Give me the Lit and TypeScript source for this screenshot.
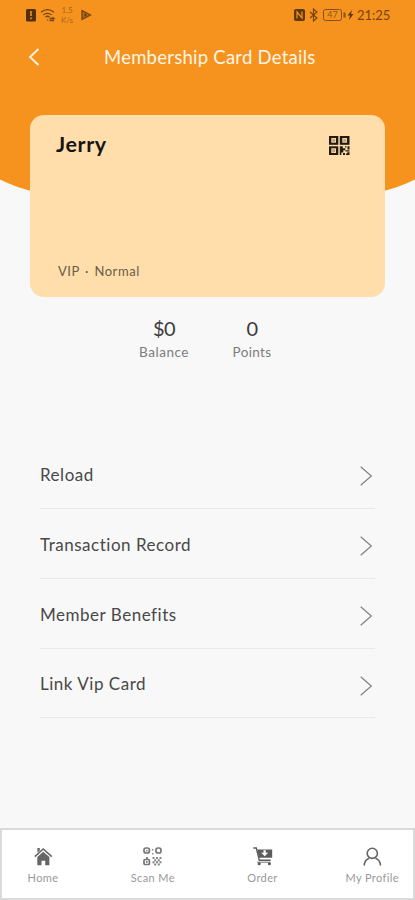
import { LitElement, html, svg, css } from "lit";
import { customElement } from "lit/decorators.js";

const scanIcon = svg`
  <g fill="none" stroke="#777" stroke-width="1.7">
    <rect x="1" y="1" width="5.4" height="5" rx="2"/>
    <rect x="13" y="1" width="5" height="5" rx="2"/>
    <rect x="1" y="12.5" width="5.4" height="5" rx="1"/>
  </g>
  <g fill="#888">
    <path d="M3 3h1.6v1.4H3zM3 14h1.6v2H3zM9 2h1.4v1.6H9zM9 6h1.4v1.4H9zM3 10h2v2H3z"/>
    <path d="M9.5 10h2v2h-2zM13 10h2v2h-2zM16.5 10h2v2h-2zM11.2 12.2h2v2h-2zM14.8 12.2h2v2h-2zM9.5 14.3h2v2h-2zM13 14.3h2v2h-2zM16.5 14.3h2v2h-2zM11.2 16.6h2v1.8h-2zM14.8 16.6h2v1.8h-2z"/>
  </g>`;

const homeIcon = svg`
  <path d="M.8 9.6 9.2 2l8.6 7.6" fill="none" stroke="#666" stroke-width="1.6"/>
  <path d="M3.4 1h2.4v2.4L3.4 5.600zM3.300 10.100 9.200 4.700l6.200 5.400v8.200h-4.200v-4.600H7.500v4.600H3.300z" fill="#666"/>`;

const cartIcon = svg`
  <path d="M.3 1h3l3 12.300h11.400" fill="none" stroke="#5c5c5c" stroke-width="1.4"/>
  <path d="M4.200 2.600h15v8.200H6.100z" fill="#5c5c5c"/>
  <path d="M10.500 3.300h2.300v2.500h2.400l-3.500 3.400-3.500-3.400h2.300z" fill="#fff"/>
  <path d="M4.200 15.200h13.200" stroke="#777" stroke-width="1"/>
  <circle cx="6.200" cy="16.800" r="1.500" fill="#555"/><circle cx="16.400" cy="16.800" r="1.500" fill="#555"/>`;

const profileIcon = svg`
  <g fill="none" stroke="#666" stroke-width="1.6">
    <circle cx="9.3" cy="6.3" r="5.1"/>
    <path d="M1.200 18.500c.2-3.700 2-6.300 5-7.300M12.400 11.200c3 1 4.900 3.600 5.100 7.300"/>
  </g>`;

@customElement("app-root")
export class AppRoot extends LitElement {
  static styles = css`
    :host {
      display: flex;
      flex-direction: column;
      position: relative;
      width: 415px;
      height: 900px;
      overflow: hidden;
      background: #f8f8f8;
      color: #333;
      font-family: Lato, "Noto Sans", sans-serif;
      white-space: nowrap;
    }
    * { box-sizing: border-box; }
    svg { display: block; flex: none; overflow: visible; }
    .backdrop { position: absolute; left: 0; top: 0; }
    .status {
      position: relative;
      display: flex;
      align-items: center;
      height: 30px;
      padding: 0 24px 0 25px;
      color: #76450f;
    }
    .rate {
      width: 16px;
      margin-left: 2px;
      font-size: 8px;
      line-height: 10px;
      text-align: center;
      color: #a9651c;
    }
    .play { margin-left: 6px; }
    .right { display: flex; align-items: center; margin-left: auto; }
    .clock { font-size: 13px; margin-left: 3px; width: 34px; line-height: 16px; }
    .title-bar {
      position: relative;
      display: flex;
      align-items: center;
      height: 53px;
      padding-left: 28px;
    }
    .title {
      margin: 0 0 0 63px;
      font-size: 18.5px;
      font-weight: 400;
      letter-spacing: 0.25px;
      color: #fff6e6;
    }
    .card {
      position: relative;
      display: flex;
      flex-direction: column;
      justify-content: space-between;
      width: 355px;
      height: 182px;
      margin: 32px 0 0 30px;
      padding: 16px 35px 17px 26px;
      border-radius: 14px;
      background: #ffdeab;
    }
    .card-head { display: flex; justify-content: space-between; }
    .name { font-size: 21.5px; line-height: 26px; font-weight: 700; color: #151515; letter-spacing: 0.6px; }
    .qr { margin-top: 5px; }
    .tier { margin-left: 2px; font-size: 13px; line-height: 18px; letter-spacing: 0.55px; word-spacing: 1.6px; color: #6c5b45; }
    .stats { display: flex; height: 152px; padding: 18px 0 0 133px; }
    .stat { width: 62px; margin-right: 26px; text-align: center; }
    .value { font-size: 20px; line-height: 26px; letter-spacing: -0.5px; color: #3c3c3c; }
    .caption { font-size: 13.5px; line-height: 23px; letter-spacing: 0.55px; color: #7c7c7c; }
    .stat + .stat .caption { letter-spacing: 0.35px; }
    .menu { display: flex; flex-direction: column; width: 335px; margin: -9.5px 0 0 40px; }
    .row {
      display: flex;
      justify-content: space-between;
      height: 69.7px;
      padding: 23.8px 3px 0 0;
      border-bottom: 1px solid #eaeaea;
    }
    .label { font-size: 17px; line-height: 24px; letter-spacing: 0.52px; color: #484848; }
    .chevron { margin-top: 3.2px; }
    .nav {
      display: flex;
      width: 415px;
      height: 72px;
      margin-top: auto;
      border: 2px solid #dadada;
      background: #fff;
    }
    .tab {
      display: flex;
      flex-direction: column;
      align-items: center;
      width: 109.7px;
      flex: none;
      padding-top: 17px;
    }
    .first { width: 82px; margin-right: 14px; }
    .tab-label { margin-top: 4px; font-size: 11px; line-height: 16px; letter-spacing: 0.4px; color: #999; }
  `;

  private rows = ["Reload", "Transaction Record", "Member Benefits", "Link Vip Card"];

  private tabs = [
    { label: "Home", icon: homeIcon },
    { label: "Scan Me", icon: scanIcon },
    { label: "Order", icon: cartIcon },
    { label: "My Profile", icon: profileIcon },
  ];

  render() {
    return html`
      <svg class="backdrop" width="415" height="220" viewBox="0 0 415 220">
        <path d="M0 0H415V179.500Q398 188 380 191.700H35Q17 188 0 179.500z" fill="#f6921e"/>
      </svg>
      <div class="status">
        <svg width="32" height="14" viewBox="0 0 32 14">
          <rect x="1" y="1" width="10" height="12.500" rx="1.500" fill="#533009"/>
          <path d="M6 3v5M6 9.500v1.700" stroke="#f6921e" stroke-width="1.600"/>
          <g fill="none" stroke="#704416" stroke-width="1.300">
            <path d="M16 4.200q6.500-5 13 0M18.300 6.800q4.200-3 8.400 0M20.500 9q2-1.500 4 0M22.500 11.500v1"/>
            <path d="M24.500 10.500h4.500l-1.400-1.400M29 12.500h-4.500"/>
          </g>
        </svg>
        <div class="rate">1.5<br>K/s</div>
        <svg class="play" width="11" height="12" viewBox="0 0 11 12">
          <path d="M1 1.500 9.500 6 1 10.500z" fill="#b26a1c" stroke="#754511" stroke-width="1.300"/>
          <path d="M3.500 4 6 6 3.500 8z" fill="#6b3d0c"/>
        </svg>
        <div class="right">
          <svg width="62" height="14" viewBox="0 0 62 14">
            <rect x="2" y="1" width="11" height="12" rx="2" fill="#613809"/>
            <path d="M5 10.500V4l5 6V3.500" fill="none" stroke="#f6921e" stroke-width="1.200"/>
            <path d="m18 4 7 6-3.500 3V1L25 4l-7 6" fill="none" stroke="#744512" stroke-width="1.200"/>
            <rect x="31.500" y="1.500" width="18" height="11" rx="2" fill="none" stroke="#85511b"/>
            <path d="M52.500 4.500v5" stroke="#85511b" stroke-width="2"/>
            <text x="40.500" y="10.300" text-anchor="middle" font-size="9" fill="#92591b">47</text>
            <path d="m60 2-4.500 5.500h2.500L57 12l4.500-6H59z" fill="#613809"/>
          </svg>
          <div class="clock">21:25</div>
        </div>
      </div>
      <div class="title-bar">
        <svg width="13" height="18" viewBox="0 0 13 18">
          <path d="M10.500 1 2 9l8.500 8" fill="none" stroke="#fff3df" stroke-width="1.900"/>
        </svg>
        <h1 class="title">Membership Card Details</h1>
      </div>
      <section class="card">
        <div class="card-head">
          <div class="name">Jerry</div>
          <svg class="qr" width="21" height="19" viewBox="0 0 21 19">
            <g fill="#211b13">
              <rect width="9.300" height="8.800"/><rect x="10.800" width="9.700" height="8.800"/>
              <rect y="10.300" width="9.300" height="8.700"/>
              <path d="M10.800 10.300h3v2h2.500v2h-2v2.200h-2V19h-1.500zM16 10.300h1.500v1.200H16zM18.500 10.300h2v3.200h-2zM16.500 14.200h4v1.200h-4zM14 17h2v2h-2zM18.300 16.300h2.200V19H17v-1.500h1.300z"/>
            </g>
            <g fill="#bba078" stroke="#f4d29f" stroke-width="1">
              <rect x="2.800" y="2.500" width="3.700" height="3.700"/><rect x="13.800" y="2.500" width="3.700" height="3.700"/>
              <rect x="2.800" y="12.800" width="3.700" height="3.700"/>
            </g>
          </svg>
        </div>
        <div class="tier">VIP · Normal</div>
      </section>
      <section class="stats">
        <div class="stat"><div class="value">$0</div><div class="caption">Balance</div></div>
        <div class="stat"><div class="value">0</div><div class="caption">Points</div></div>
      </section>
      <section class="menu">
        ${this.rows.map((label) => html`
          <div class="row">
            <span class="label">${label}</span>
            <svg class="chevron" width="12" height="20" viewBox="0 0 12 20">
              <path d="M.7.700 11.300 10 .7 19.300" fill="none" stroke="#858585" stroke-width="1.300"/>
            </svg>
          </div>`)}
      </section>
      <nav class="nav">
        ${this.tabs.map((tab, i) => html`
          <div class="tab ${i === 0 ? "first" : ""}">
            <svg width="19" height="19" viewBox="0 0 19 19">${tab.icon}</svg>
            <span class="tab-label">${tab.label}</span>
          </div>`)}
      </nav>
    `;
  }
}
